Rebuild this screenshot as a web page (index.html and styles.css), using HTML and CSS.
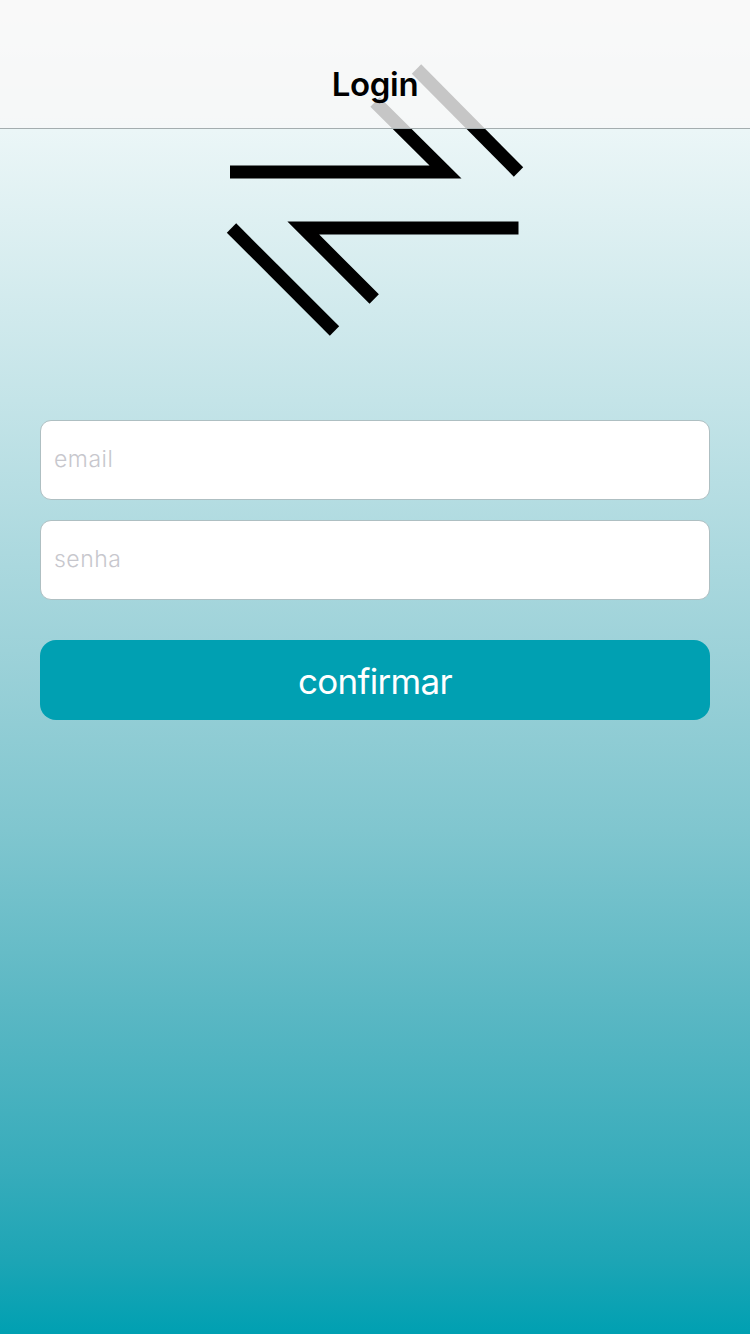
FILE: index.html
```html
<!DOCTYPE html>
<html lang="pt">
<head>
<meta charset="utf-8">
<title>Login</title>
<link rel="stylesheet" href="styles.css">
</head>
<body>
<header class="navbar"><h1 class="title">Login</h1></header>
<main class="content">
<svg class="logo" viewBox="0 0 300 300" aria-hidden="true">
<g fill="none" stroke="#000" stroke-width="13.200">
<path d="M191.500 19L293.500 122"/>
<path d="M150 52L220.500 122H5"/>
<path d="M293.500 178H78.300L149.200 249"/>
<path d="M6.500 178L109.500 281"/>
</g>
</svg>
<form class="form">
<input class="field" type="text" placeholder="email" aria-label="email">
<input class="field" type="password" placeholder="senha" aria-label="senha">
<button class="submit" type="button">confirmar</button>
</form>
</main>
</body>
</html>
```

FILE: styles.css
```css
* { box-sizing: border-box; }
body {
  margin: 0;
  height: 1334px;
  overflow: hidden;
  font-family: Inter, sans-serif;
  background: linear-gradient(#fff 0, #ebf6f7 130px, #c4e4e8 400px, #9dd2d9 650px, #80c6cf 830px, #5cb8c4 1000px, #37acbb 1170px, #1da5b5 1260px, #00a0b2 1334px);
}
.navbar {
  position: relative;
  z-index: 1;
  height: 129px;
  padding-top: 40px;
  display: flex;
  align-items: center;
  justify-content: center;
  background: rgba(247, 247, 247, .8);
  background-clip: padding-box;
  border-bottom: 1px solid #a4adaf;
}
.title { margin: 0; font-size: 33px; font-weight: 600; letter-spacing: -.3px; }
.content {
  display: flex;
  flex-direction: column;
  align-items: center;
  margin-top: -79px;
  padding: 0 40px;
}
.logo { width: 300px; height: 300px; }
.form { width: 100%; margin-top: 70px; }
.field {
  display: block;
  width: 100%;
  height: 80px;
  margin: 0 0 20px;
  padding: 0 13px 2px;
  border: 1px solid #aebfc2;
  border-radius: 11px;
  background: #fff;
  font: 300 23px Inter, sans-serif;
  letter-spacing: .5px;
}
.field::placeholder { color: #c7c7cd; opacity: 1; }
.submit {
  display: block;
  width: 100%;
  height: 80px;
  margin-top: 40px;
  padding: 2px 0 0;
  border: 0;
  border-radius: 16px;
  background: #00a0b2;
  color: #fff;
  font: 400 35px Inter, sans-serif;
  letter-spacing: -.7px;
}
```
